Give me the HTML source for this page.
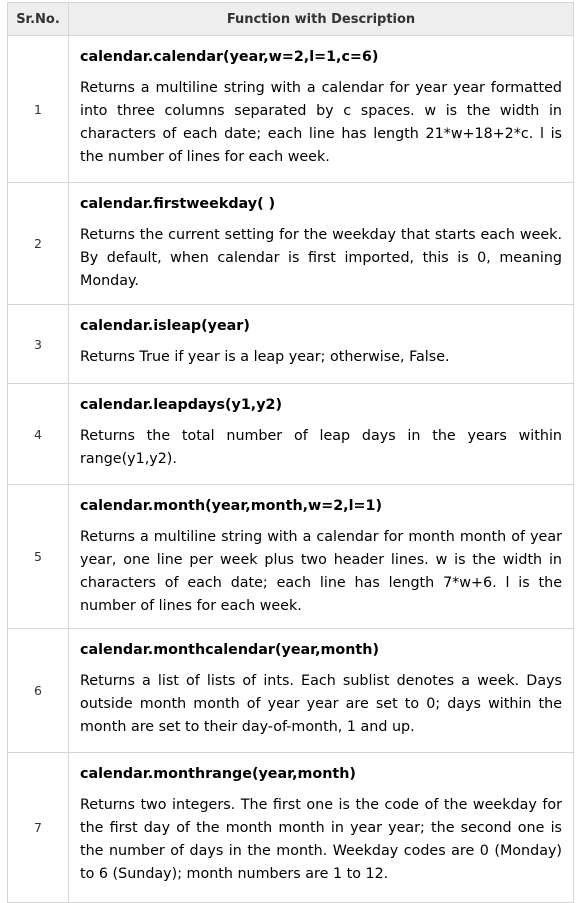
<!DOCTYPE html>
<html><head><style>
body{margin:0;background:#fff;font-family:"DejaVu Sans","Liberation Sans",sans-serif;color:#000;}
table{position:absolute;left:7px;top:2px;width:567px;border-collapse:collapse;table-layout:fixed;}
td,th{border:1px solid #d6d6d6;}
th{background:#eee;height:30px;font-size:13px;color:#333;font-weight:bold;}
td.n{text-align:center;font-size:12.5px;color:#333;}
td.d{padding:0 11px;vertical-align:top;font-size:14.3px;}
.t{font-weight:bold;line-height:23px;margin-top:10px;white-space:nowrap;}
.p{margin-top:8px;line-height:23px;}
.l{text-align:justify;text-align-last:justify;white-space:nowrap;}
.e{white-space:nowrap;}
</style></head><body>
<table>
<colgroup><col style="width:61px"><col></colgroup>
<tr><th>Sr.No.</th><th>Function with Description</th></tr>
<tr style="height:147px"><td class="n">1</td><td class="d"><div class="t">calendar.calendar(year,w=2,l=1,c=6)</div><div class="p"><div class="l">Returns a multiline string with a calendar for year year formatted</div><div class="l">into three columns separated by c spaces. w is the width in</div><div class="l">characters of each date; each line has length 21*w+18+2*c. l is</div><div class="e">the number of lines for each week.</div></div></td></tr>
<tr style="height:122px"><td class="n">2</td><td class="d"><div class="t">calendar.firstweekday( )</div><div class="p"><div class="l">Returns the current setting for the weekday that starts each week.</div><div class="l">By default, when calendar is first imported, this is 0, meaning</div><div class="e">Monday.</div></div></td></tr>
<tr style="height:79px"><td class="n">3</td><td class="d"><div class="t">calendar.isleap(year)</div><div class="p"><div class="e">Returns True if year is a leap year; otherwise, False.</div></div></td></tr>
<tr style="height:101px"><td class="n">4</td><td class="d"><div class="t">calendar.leapdays(y1,y2)</div><div class="p"><div class="l">Returns the total number of leap days in the years within</div><div class="e">range(y1,y2).</div></div></td></tr>
<tr style="height:144px"><td class="n">5</td><td class="d"><div class="t">calendar.month(year,month,w=2,l=1)</div><div class="p"><div class="l">Returns a multiline string with a calendar for month month of year</div><div class="l">year, one line per week plus two header lines. w is the width in</div><div class="l">characters of each date; each line has length 7*w+6. l is the</div><div class="e">number of lines for each week.</div></div></td></tr>
<tr style="height:124px"><td class="n">6</td><td class="d"><div class="t">calendar.monthcalendar(year,month)</div><div class="p"><div class="l">Returns a list of lists of ints. Each sublist denotes a week. Days</div><div class="l">outside month month of year year are set to 0; days within the</div><div class="e">month are set to their day-of-month, 1 and up.</div></div></td></tr>
<tr style="height:150px"><td class="n">7</td><td class="d"><div class="t">calendar.monthrange(year,month)</div><div class="p"><div class="l">Returns two integers. The first one is the code of the weekday for</div><div class="l">the first day of the month month in year year; the second one is</div><div class="l">the number of days in the month. Weekday codes are 0 (Monday)</div><div class="e">to 6 (Sunday); month numbers are 1 to 12.</div></div></td></tr>
</table>
</body></html>
